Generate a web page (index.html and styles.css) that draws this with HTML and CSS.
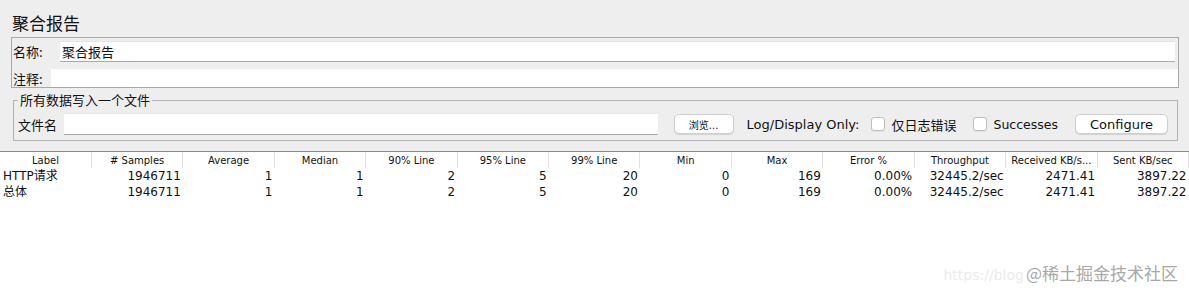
FILE: index.html
```html
<!DOCTYPE html>
<html lang="zh">
<head>
<meta charset="utf-8">
<title>聚合报告</title>
<link rel="stylesheet" href="styles.css">
</head>
<body>
<div class="panel">
  <h1 class="title">聚合报告</h1>
  <div class="namebox">
    <div class="row row-name">
      <span class="lbl lbl-name">名称:</span>
      <div class="field field-name">聚合报告</div>
    </div>
    <div class="row row-comment">
      <span class="lbl lbl-comment">注释:</span>
      <div class="field field-comment"></div>
    </div>
  </div>
  <fieldset class="file-group">
    <legend>所有数据写入一个文件</legend>
    <div class="file-row">
      <span class="file-lbl">文件名</span>
      <div class="field field-file"></div>
      <button class="btn btn-browse">浏览...</button>
      <span class="opt-lbl">Log/Display Only:</span>
      <span class="check"></span>
      <span class="check-lbl">仅日志错误</span>
      <span class="check check2"></span>
      <span class="check-lbl check-lbl-en">Successes</span>
      <button class="btn btn-config">Configure</button>
    </div>
  </fieldset>
</div>
<div class="results">
  <table class="grid">
    <thead>
      <tr>
        <th>Label</th><th># Samples</th><th>Average</th><th>Median</th><th>90% Line</th><th>95% Line</th><th>99% Line</th><th>Min</th><th>Max</th><th>Error %</th><th>Throughput</th><th>Received KB/s...</th><th>Sent KB/sec</th>
      </tr>
    </thead>
    <tbody>
      <tr>
        <td class="label">HTTP请求</td><td>1946711</td><td>1</td><td>1</td><td>2</td><td>5</td><td>20</td><td>0</td><td>169</td><td>0.00%</td><td>32445.2/sec</td><td>2471.41</td><td>3897.22</td>
      </tr>
      <tr>
        <td class="label">总体</td><td>1946711</td><td>1</td><td>1</td><td>2</td><td>5</td><td>20</td><td>0</td><td>169</td><td>0.00%</td><td>32445.2/sec</td><td>2471.41</td><td>3897.22</td>
      </tr>
    </tbody>
  </table>
  <div class="watermark"><span class="wm-url">https://blog</span><span class="wm-main">@稀土掘金技术社区</span></div>
</div>
</body>
</html>
```
FILE: styles.css
```css
* { box-sizing: border-box; }
html, body { margin: 0; padding: 0; }
body {
  width: 1189px;
  height: 297px;
  overflow: hidden;
  background: #ffffff;
  font-family: "DejaVu Sans", "Noto Sans CJK SC", sans-serif;
  color: #1a1a1a;
}
.panel {
  background: #eeeeee;
  height: 151px;
  padding-top: 12px;
}
.title {
  margin: 0 0 3px 12px;
  font-size: 17px;
  font-weight: normal;
  line-height: 22px;
  font-family: "Noto Sans CJK SC", sans-serif;
  color: #111;
}
.namebox {
  margin: 0 10px 0 11px;
  border: 1px solid #a8a8a8;
  height: 51px;
  display: flex;
  flex-direction: column;
}
.row { display: flex; align-items: center; }
.row-name { margin-top: 3px; padding-right: 3px; height: 21px; }
.row-comment { margin-top: auto; height: 18px; }
.lbl {
  font-family: "Noto Sans CJK SC", sans-serif;
  font-size: 13px;
  padding-left: 1px;
  color: #111;
  white-space: nowrap;
  flex-shrink: 0;
}
.lbl-name { width: 48px; }
.lbl-comment { width: 39px; }
.field {
  background: #fff;
  flex: 1;
  font-family: "Noto Sans CJK SC", sans-serif;
  font-size: 13px;
  color: #111;
}
.field-name {
  height: 21px;
  line-height: 19px;
  padding-left: 2px;
  border-top: 1px solid #e4e4e4;
  border-bottom: 1px solid #a9a9a9;
}
.field-comment { height: 18px; }
.file-group {
  margin: 4px 11px 0 13px;
  padding: 5px 9px 5px 4px;
  border: 1px solid #b4b4b4;
  min-inline-size: 0;
}
.file-group legend {
  padding: 0 2px;
  font-family: "Noto Sans CJK SC", sans-serif;
  font-size: 13px;
  line-height: 16px;
  color: #111;
}
.file-row {
  display: flex;
  align-items: center;
  height: 22px;
}
.file-lbl {
  font-family: "Noto Sans CJK SC", sans-serif;
  font-size: 13px;
  width: 46px;
  color: #111;
  flex-shrink: 0;
}
.field-file {
  height: 22px;
  border-top: 1px solid #e6e6e6;
  border-bottom: 1px solid #a9a9a9;
}
.btn {
  background: #ffffff;
  border: 1px solid #cfcfcf;
  border-radius: 5px;
  box-shadow: 0 1px 1px rgba(0,0,0,0.12);
  height: 20px;
  padding: 0;
  color: #111;
  font-family: "DejaVu Sans", "Noto Sans CJK SC", sans-serif;
  flex-shrink: 0;
}
.btn-browse {
  margin-left: 16px;
  width: 60px;
  font-size: 10px;
}
.opt-lbl {
  margin-left: 13px;
  font-size: 13px;
  color: #111;
  white-space: nowrap;
}
.check {
  width: 14px;
  height: 14px;
  margin-left: 12px;
  border: 1px solid #bdbdbd;
  border-radius: 3px;
  background: #fff;
  box-shadow: 0 1px 1px rgba(0,0,0,0.06);
  flex-shrink: 0;
}
.check2 { margin-left: 17px; }
.check-lbl {
  margin-left: 6px;
  font-size: 13px;
  color: #111;
  white-space: nowrap;
}
.check-lbl-en { font-size: 12.5px; }
.btn-config {
  margin-left: 17px;
  width: 93px;
  font-size: 13px;
}
.results {
  position: relative;
  height: 146px;
  border-top: 1px solid #8a8a8a;
  background: #fff;
}
.grid {
  width: 1189px;
  table-layout: fixed;
  border-collapse: collapse;
}
.grid th {
  font-weight: normal;
  font-size: 10px;
  height: 16px;
  padding: 0;
  color: #111;
  text-align: center;
  border-right: 1px solid #e2e2e2;
  white-space: nowrap;
  overflow: hidden;
}
.grid td {
  font-size: 12px;
  height: 16px;
  line-height: 16px;
  padding: 0 2px 0 0;
  text-align: right;
  color: #111;
  white-space: nowrap;
}
.grid td.label {
  text-align: left;
  padding-left: 3px;
}
.watermark {
  position: absolute;
  right: 11px;
  bottom: 12px;
  display: flex;
  align-items: baseline;
  font-family: "Noto Sans CJK SC", sans-serif;
}
.wm-url {
  font-family: "DejaVu Sans", sans-serif;
  font-size: 14px;
  color: #ebebeb;
  margin-right: 2px;
}
.wm-main {
  font-size: 17px;
  color: #a8a8a8;
}
```
